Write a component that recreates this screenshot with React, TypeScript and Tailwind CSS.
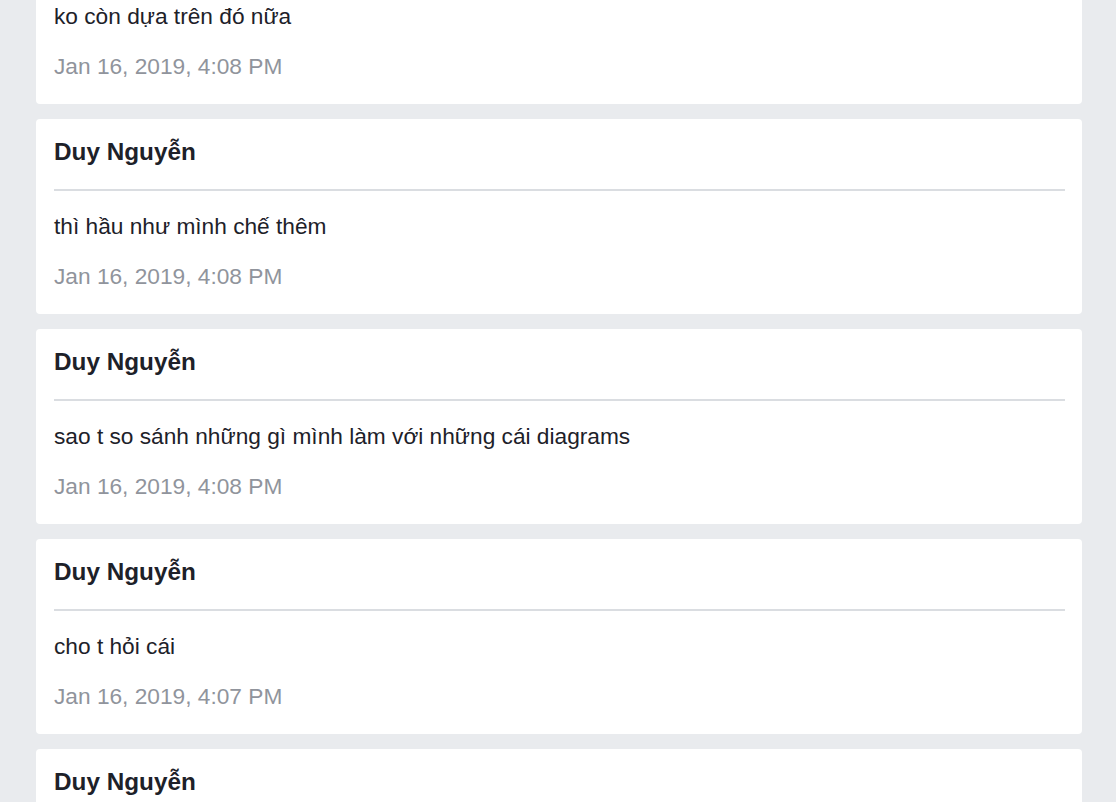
import React from 'react';

interface Message {
    author: string;
    text: string;
    time: string;
}

const MESSAGES: Message[] = [
    { author: 'Duy Nguyễn', text: 'ko còn dựa trên đó nữa', time: 'Jan 16, 2019, 4:08 PM' },
    { author: 'Duy Nguyễn', text: 'thì hầu như mình chế thêm', time: 'Jan 16, 2019, 4:08 PM' },
    { author: 'Duy Nguyễn', text: 'sao t so sánh những gì mình làm với những cái diagrams', time: 'Jan 16, 2019, 4:08 PM' },
    { author: 'Duy Nguyễn', text: 'cho t hỏi cái', time: 'Jan 16, 2019, 4:07 PM' },
    { author: 'Duy Nguyễn', text: 'ok', time: 'Jan 16, 2019, 4:07 PM' },
];

const MessageCard: React.FC<{ message: Message }> = ({ message }) => (
    <div className="bg-white rounded-[4px] px-[18px] pr-[17px] pt-[18px] pb-[23px]">
        <h3 className="text-[24.3px] leading-[30px] font-bold text-[#1d2129]">{message.author}</h3>
        <div className="mt-[22px] h-[2px] bg-[#dadde1]" />
        <p className="mt-[20px] text-[22.7px] leading-[30px] text-[#1d2129]">{message.text}</p>
        <p className="mt-[20px] text-[22.7px] leading-[30px] text-[#90949c]">{message.time}</p>
    </div>
);

export default function App() {
    return (
        <div
            className="h-screen overflow-hidden bg-[#e9ebee] pl-[36px] pr-[34px]"
            style={{ fontFamily: '"Liberation Sans", Arial, sans-serif' }}
        >
            {/* list is scrolled: first card partly above the fold */}
            <div className="-mt-[91px] flex flex-col gap-[15px]">
                {MESSAGES.map((m, i) => (
                    <MessageCard key={i} message={m} />
                ))}
            </div>
        </div>
    );
}
